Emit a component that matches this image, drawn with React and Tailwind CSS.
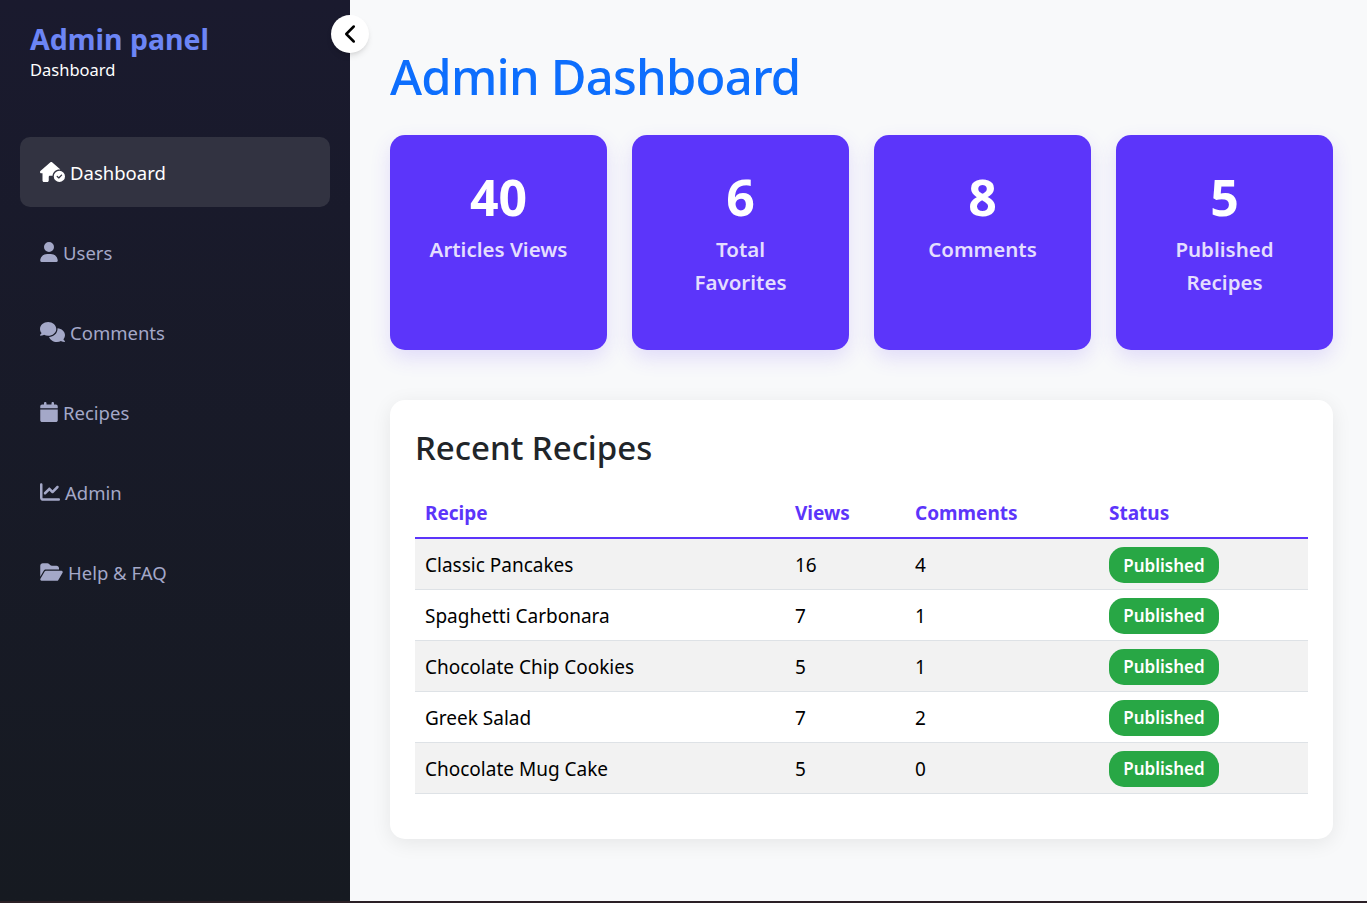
import { FaHouseCircleCheck, FaUser, FaComments, FaCalendar, FaChartLine, FaFolderOpen } from 'react-icons/fa6';
import { ChevronLeft } from 'lucide-react';

const navItems = [
  { label: 'Dashboard', icon: FaHouseCircleCheck, iconClass: 'h-[20px] w-[25px] shrink-0', active: true },
  { label: 'Users', icon: FaUser, iconClass: 'h-[20px] w-[18px] shrink-0' },
  { label: 'Comments', icon: FaComments, iconClass: 'h-[20px] w-[25px] shrink-0' },
  { label: 'Recipes', icon: FaCalendar, iconClass: 'h-[20px] w-[18px] shrink-0' },
  { label: 'Admin', icon: FaChartLine, iconClass: 'h-[20px] w-[20px] shrink-0' },
  { label: 'Help & FAQ', icon: FaFolderOpen, iconClass: 'h-[20px] w-[23px] shrink-0' },
];

const stats = [
  { value: 40, label: 'Articles Views' },
  { value: 6, label: 'Total Favorites' },
  { value: 8, label: 'Comments' },
  { value: 5, label: 'Published Recipes' },
];

const recipes = [
  { name: 'Classic Pancakes', views: 16, comments: 4 },
  { name: 'Spaghetti Carbonara', views: 7, comments: 1 },
  { name: 'Chocolate Chip Cookies', views: 5, comments: 1 },
  { name: 'Greek Salad', views: 7, comments: 2 },
  { name: 'Chocolate Mug Cake', views: 5, comments: 0 },
];

function NavItem({ item }) {
  const Icon = item.icon;
  return (
    <a
      className={
        item.active
          ? 'flex items-center h-[70px] px-5 gap-[5px] rounded-[10px] bg-[#323341] text-white text-[18.5px]'
          : 'flex items-center h-[70px] px-5 gap-[5px] rounded-[10px] text-[#a4a8c8] text-[18.5px]'
      }
    >
      <Icon className={item.iconClass} />
      <span className="relative top-[1px]">{item.label}</span>
    </a>
  );
}

function Sidebar() {
  return (
    <aside className="relative w-[350px] shrink-0 bg-linear-to-b from-[#1a1a2e] to-[#161a21] px-5 pt-[20px]">
      <div className="px-[10px]">
        <h1 className="text-[28.5px] leading-[38px] font-bold text-[#6c85f5]">Admin panel</h1>
        <p className="text-[16.5px] leading-[24px] text-white">Dashboard</p>
      </div>
      <nav className="mt-[55px] flex flex-col gap-[10px]">
        {navItems.map((item) => (
          <NavItem key={item.label} item={item} />
        ))}
      </nav>
      <button className="absolute top-[15px] -right-[19px] w-[38px] h-[38px] rounded-full bg-white shadow-md flex items-center justify-center text-black">
        <ChevronLeft size={30} strokeWidth={2} className="-ml-[1px]" />
      </button>
    </aside>
  );
}

function StatCard({ stat }) {
  return (
    <div className="h-[215px] rounded-[15px] bg-[#5c35fa] shadow-[0_8px_20px_rgba(92,53,250,0.15)] px-[36px] pt-[30px] text-center">
      <div className="text-[50px] leading-[64px] font-bold text-white">{stat.value}</div>
      <div className="mt-[4px] text-[20.5px] leading-[33px] font-semibold text-[#e4defe]">{stat.label}</div>
    </div>
  );
}

function RecipesTable() {
  return (
    <table className="w-full border-collapse text-[19px] text-black">
      <thead>
        <tr className="border-b-2 border-[#5c35fa] text-left text-[#5c35fa]">
          <th className="w-[370px] px-[10px] pt-[2px] h-[50px] font-bold">Recipe</th>
          <th className="w-[120px] px-[10px] pt-[2px] font-bold">Views</th>
          <th className="w-[194px] px-[10px] pt-[2px] font-bold">Comments</th>
          <th className="px-[10px] pt-[2px] font-bold">Status</th>
        </tr>
      </thead>
      <tbody>
        {recipes.map((r) => (
          <tr key={r.name} className="h-[51px] border-b border-[#dee2e6] odd:bg-[#f2f2f2]">
            <td className="px-[10px] pt-[3px]">{r.name}</td>
            <td className="px-[10px] pt-[3px]">{r.views}</td>
            <td className="px-[10px] pt-[3px]">{r.comments}</td>
            <td className="px-[10px] pt-[2px]">
              <span className="inline-flex items-center justify-center w-[110px] h-[36px] pt-[1px] rounded-[15px] bg-[#28a745] text-white text-[17px] font-semibold align-middle">
                Published
              </span>
            </td>
          </tr>
        ))}
      </tbody>
    </table>
  );
}

export default function App() {
  return (
    <div className="flex flex-col h-[903px] overflow-hidden font-['Noto_Sans',sans-serif] bg-[#f8f9fa]">
      <div className="flex flex-1 min-h-0">
        <Sidebar />
        <main className="flex-1 pl-[40px] pr-[34px] pt-[40px]">
          <h2 className="text-[49px] leading-[73px] mb-[22px] tracking-[-0.8px] font-medium text-[#0d6efd]">Admin Dashboard</h2>
          <div className="grid grid-cols-4 gap-[25px]">
            {stats.map((s) => (
              <StatCard key={s.label} stat={s} />
            ))}
          </div>
          <section className="mt-[50px] h-[439px] rounded-[15px] bg-white shadow-[0_4px_20px_rgba(0,0,0,0.08)] px-[25px] pt-[25px]">
            <h3 className="text-[33px] leading-[46px] font-medium text-[#212529] mb-[17px]">Recent Recipes</h3>
            <RecipesTable />
          </section>
        </main>
      </div>
      <div className="h-[2px] bg-[#2b2026]" />
    </div>
  );
}
